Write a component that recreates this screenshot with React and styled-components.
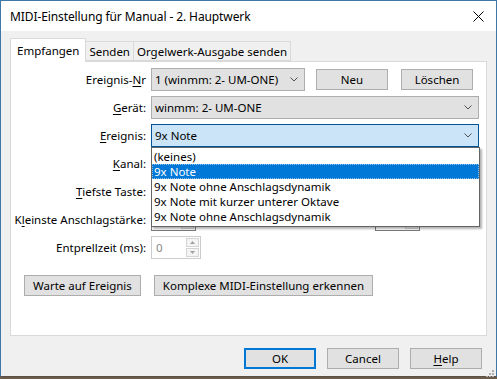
import React from 'react';
import styled, { createGlobalStyle } from 'styled-components';

const GlobalStyle = createGlobalStyle`
  html, body {
    margin: 0;
    padding: 0;
    background: #6e5c4a;
  }
  body {
    font-family: "Noto Sans", "Open Sans", sans-serif;
    font-size: 11.5px;
    color: #000;
  }
  * { box-sizing: border-box; }
`;

const Window = styled.div`
  width: 497px;
  height: 377px;
  background: #f0f0f0;
  border: 1px solid #3f78a6;
  border-bottom-color: #5a5047;
  display: flex;
  flex-direction: column;
  position: relative;
`;

const TitleBar = styled.div`
  height: 30px;
  background: #fff;
  display: flex;
  align-items: center;
  justify-content: space-between;
  padding: 0 12px 0 9px;
`;

const Title = styled.div`
  font-size: 12px;
  letter-spacing: -0.1px;
`;

const Body = styled.div`
  flex: 1;
  padding: 7px 10px 0 9px;
  display: flex;
  flex-direction: column;
`;

const Tabs = styled.div`
  display: flex;
  align-items: flex-end;
  height: 23px;
  position: relative;
  z-index: 1;
`;

const Tab = styled.div`
  height: ${p => (p.$active ? '24px' : '20px')};
  padding: 0 ${p => (p.$active ? '6px' : '3px')};
  background: ${p => (p.$active ? '#fff' : '#f0f0f0')};
  border: 1px solid #d9d9d9;
  border-bottom: ${p => (p.$active ? 'none' : '1px solid #d9d9d9')};
  margin-left: ${p => (p.$first ? '0' : '-1px')};
  display: flex;
  align-items: center;
  white-space: nowrap;
  margin-bottom: ${p => (p.$active ? '-1px' : '0')};
`;

const Panel = styled.div`
  background: #fff;
  border: 1px solid #d9d9d9;
  height: 275px;
  width: 477px;
  padding: 6px 0 0 0;
`;

const Form = styled.div`
  display: grid;
  grid-template-columns: 135px 1fr;
  column-gap: 5px;
  row-gap: 5px;
  padding-right: 7px;
`;

const Label = styled.div`
  height: 23px;
  display: flex;
  align-items: center;
  justify-content: flex-end;
  white-space: nowrap;
  u { text-decoration: underline; text-underline-offset: 2px; }
`;

const Controls = styled.div`
  display: flex;
  align-items: center;
  height: 23px;
  position: relative;
`;

const Combo = styled.div`
  width: ${p => (p.$w ? `${p.$w}px` : '100%')};
  height: 23px;
  background: ${p => (p.$focus ? '#cce4f7' : '#e1e1e1')};
  border: 1px solid ${p => (p.$focus ? '#005499' : '#adadad')};
  display: flex;
  align-items: center;
  justify-content: space-between;
  padding: 0 6px 0 3px;
  white-space: nowrap;
`;

const Chevron = () => (
  <svg width="8" height="5" viewBox="0 0 8 5">
    <path d="M0.5 0.5 L4 4 L7.5 0.5" fill="none" stroke="#505050" strokeWidth="1" />
  </svg>
);

const Button = styled.button`
  font: inherit;
  color: #000;
  width: ${p => (p.$w ? `${p.$w}px` : 'auto')};
  height: 21px;
  padding: 0 ${p => (p.$w ? '0' : '8px')};
  margin-left: ${p => p.$ml || 0}px;
  background: #e1e1e1;
  border: ${p => (p.$default ? '2px solid #0078d7' : '1px solid #adadad')};
  display: flex;
  align-items: center;
  justify-content: center;
  white-space: nowrap;
  u { text-decoration: underline; text-underline-offset: 2px; }
`;

const DropList = styled.div`
  position: absolute;
  left: 0;
  top: 23px;
  width: calc(100% + 1px);
  background: #fff;
  border: 1px solid #646464;
  box-shadow: 2px 2px 2px rgba(0, 0, 0, 0.3);
  padding: 1px 0 2px;
  z-index: 5;
`;

const Item = styled.div`
  height: 15px;
  line-height: 15px;
  padding-left: 2px;
  white-space: nowrap;
  background: ${p => (p.$selected ? '#0078d7' : 'transparent')};
  color: ${p => (p.$selected ? '#fff' : '#000')};
  outline: ${p => (p.$selected ? '1px dotted #8fc3ee' : 'none')};
  outline-offset: -1px;
`;

const Spin = styled.div`
  width: ${p => p.$w || 45}px;
  height: 23px;
  border: 1px solid ${p => (p.$disabled ? '#cccccc' : '#7a7a7a')};
  background: #fff;
  display: flex;
  margin-left: ${p => (p.$push ? 'auto' : '0')};
`;

const SpinValue = styled.div`
  flex: 1;
  display: flex;
  align-items: center;
  padding-left: 4px;
  color: ${p => (p.$disabled ? '#8a8a8a' : '#000')};
`;

const SpinButtons = styled.div`
  width: 14px;
  display: flex;
  flex-direction: column;
  padding: 1px 1px 1px 0;
  gap: 1px;
`;

const SpinHalf = styled.div`
  flex: 1;
  border: 1px solid #d4d4d4;
  background: #f4f4f4;
  display: flex;
  align-items: center;
  justify-content: center;
`;

const Arrow = ({ up, color }) => (
  <svg width="5" height="3" viewBox="0 0 5 3">
    <path d={up ? 'M0 3 L2.5 0 L5 3 Z' : 'M0 0 L2.5 3 L5 0 Z'} fill={color} />
  </svg>
);

const Spinner = ({ value, disabled, w, push }) => (
  <Spin $disabled={disabled} $w={w} $push={push}>
    <SpinValue $disabled={disabled}>{value}</SpinValue>
    <SpinButtons>
      <SpinHalf><Arrow up color={disabled ? '#a0a0a0' : '#000'} /></SpinHalf>
      <SpinHalf><Arrow color={disabled ? '#a0a0a0' : '#000'} /></SpinHalf>
    </SpinButtons>
  </Spin>
);

const Spacer = styled.div`
  width: ${p => p.$w}px;
  flex-shrink: 0;
`;

const ActionRow = styled.div`
  display: flex;
  gap: 13px;
  padding: 16px 0 0 13px;
`;

const Footer = styled.div`
  display: flex;
  justify-content: flex-end;
  gap: 11px;
  padding: 12px 4px 0 0;
`;

const Grip = styled.div`
  position: absolute;
  right: 2px;
  bottom: 2px;
  width: 8px;
  height: 8px;
`;

const events = [
  '(keines)',
  '9x Note',
  '9x Note ohne Anschlagsdynamik',
  '9x Note mit kurzer unterer Oktave',
  '9x Note ohne Anschlagsdynamik',
];

export default function App() {
  return (
    <>
      <GlobalStyle />
      <Window>
        <TitleBar>
          <Title>MIDI-Einstellung für Manual - 2. Hauptwerk</Title>
          <svg width="11" height="11" viewBox="0 0 11 11">
            <path d="M0.5 0.5 L10.5 10.5 M10.5 0.5 L0.5 10.5" stroke="#000" strokeWidth="1" />
          </svg>
        </TitleBar>
        <Body>
          <Tabs>
            <Tab $active $first>Empfangen</Tab>
            <Tab>Senden</Tab>
            <Tab>Orgelwerk-Ausgabe senden</Tab>
          </Tabs>
          <Panel>
            <Form>
              <Label>Ereignis-<u>N</u>r</Label>
              <Controls>
                <Combo $w={154}>1 (winmm: 2- UM-ONE)<Chevron /></Combo>
                <Button $w={72} $ml={11}>Neu</Button>
                <Button $w={72} $ml={13}>Löschen</Button>
              </Controls>

              <Label><u>G</u>erät:</Label>
              <Controls>
                <Combo>winmm: 2- UM-ONE<Chevron /></Combo>
              </Controls>

              <Label><u>E</u>reignis:</Label>
              <Controls>
                <Combo $focus>9x Note<Chevron /></Combo>
                <DropList>
                  {events.map((e, i) => (
                    <Item key={i} $selected={i === 1}>{e}</Item>
                  ))}
                </DropList>
              </Controls>

              <Label><u>K</u>anal:</Label>
              <Controls>
                <Spinner />
              </Controls>

              <Label><u>T</u>iefste Taste:</Label>
              <Controls>
                <Combo $w={120}><span /><Chevron /></Combo>
              </Controls>

              <Label>K<u>l</u>einste Anschlagstärke:</Label>
              <Controls>
                <Spinner />
                <Spinner push />
                <Spacer $w={59} />
              </Controls>

              <Label>Entprellzeit (ms):</Label>
              <Controls>
                <Spinner value="0" disabled w={50} />
              </Controls>
            </Form>
            <ActionRow>
              <Button>Warte auf Ereignis</Button>
              <Button>Komplexe MIDI-Einstellung erkennen</Button>
            </ActionRow>
          </Panel>
          <Footer>
            <Button $w={72} $default>OK</Button>
            <Button $w={72}>Cancel</Button>
            <Button $w={72}><u>H</u>elp</Button>
          </Footer>
        </Body>
        <Grip>
          <svg width="8" height="8" viewBox="0 0 8 8">
            {[[6, 0], [3, 3], [6, 3], [0, 6], [3, 6], [6, 6]].map(([x, y], i) => (
              <rect key={i} x={x} y={y} width="2" height="2" fill="#b0b0b0" />
            ))}
          </svg>
        </Grip>
      </Window>
    </>
  );
}
